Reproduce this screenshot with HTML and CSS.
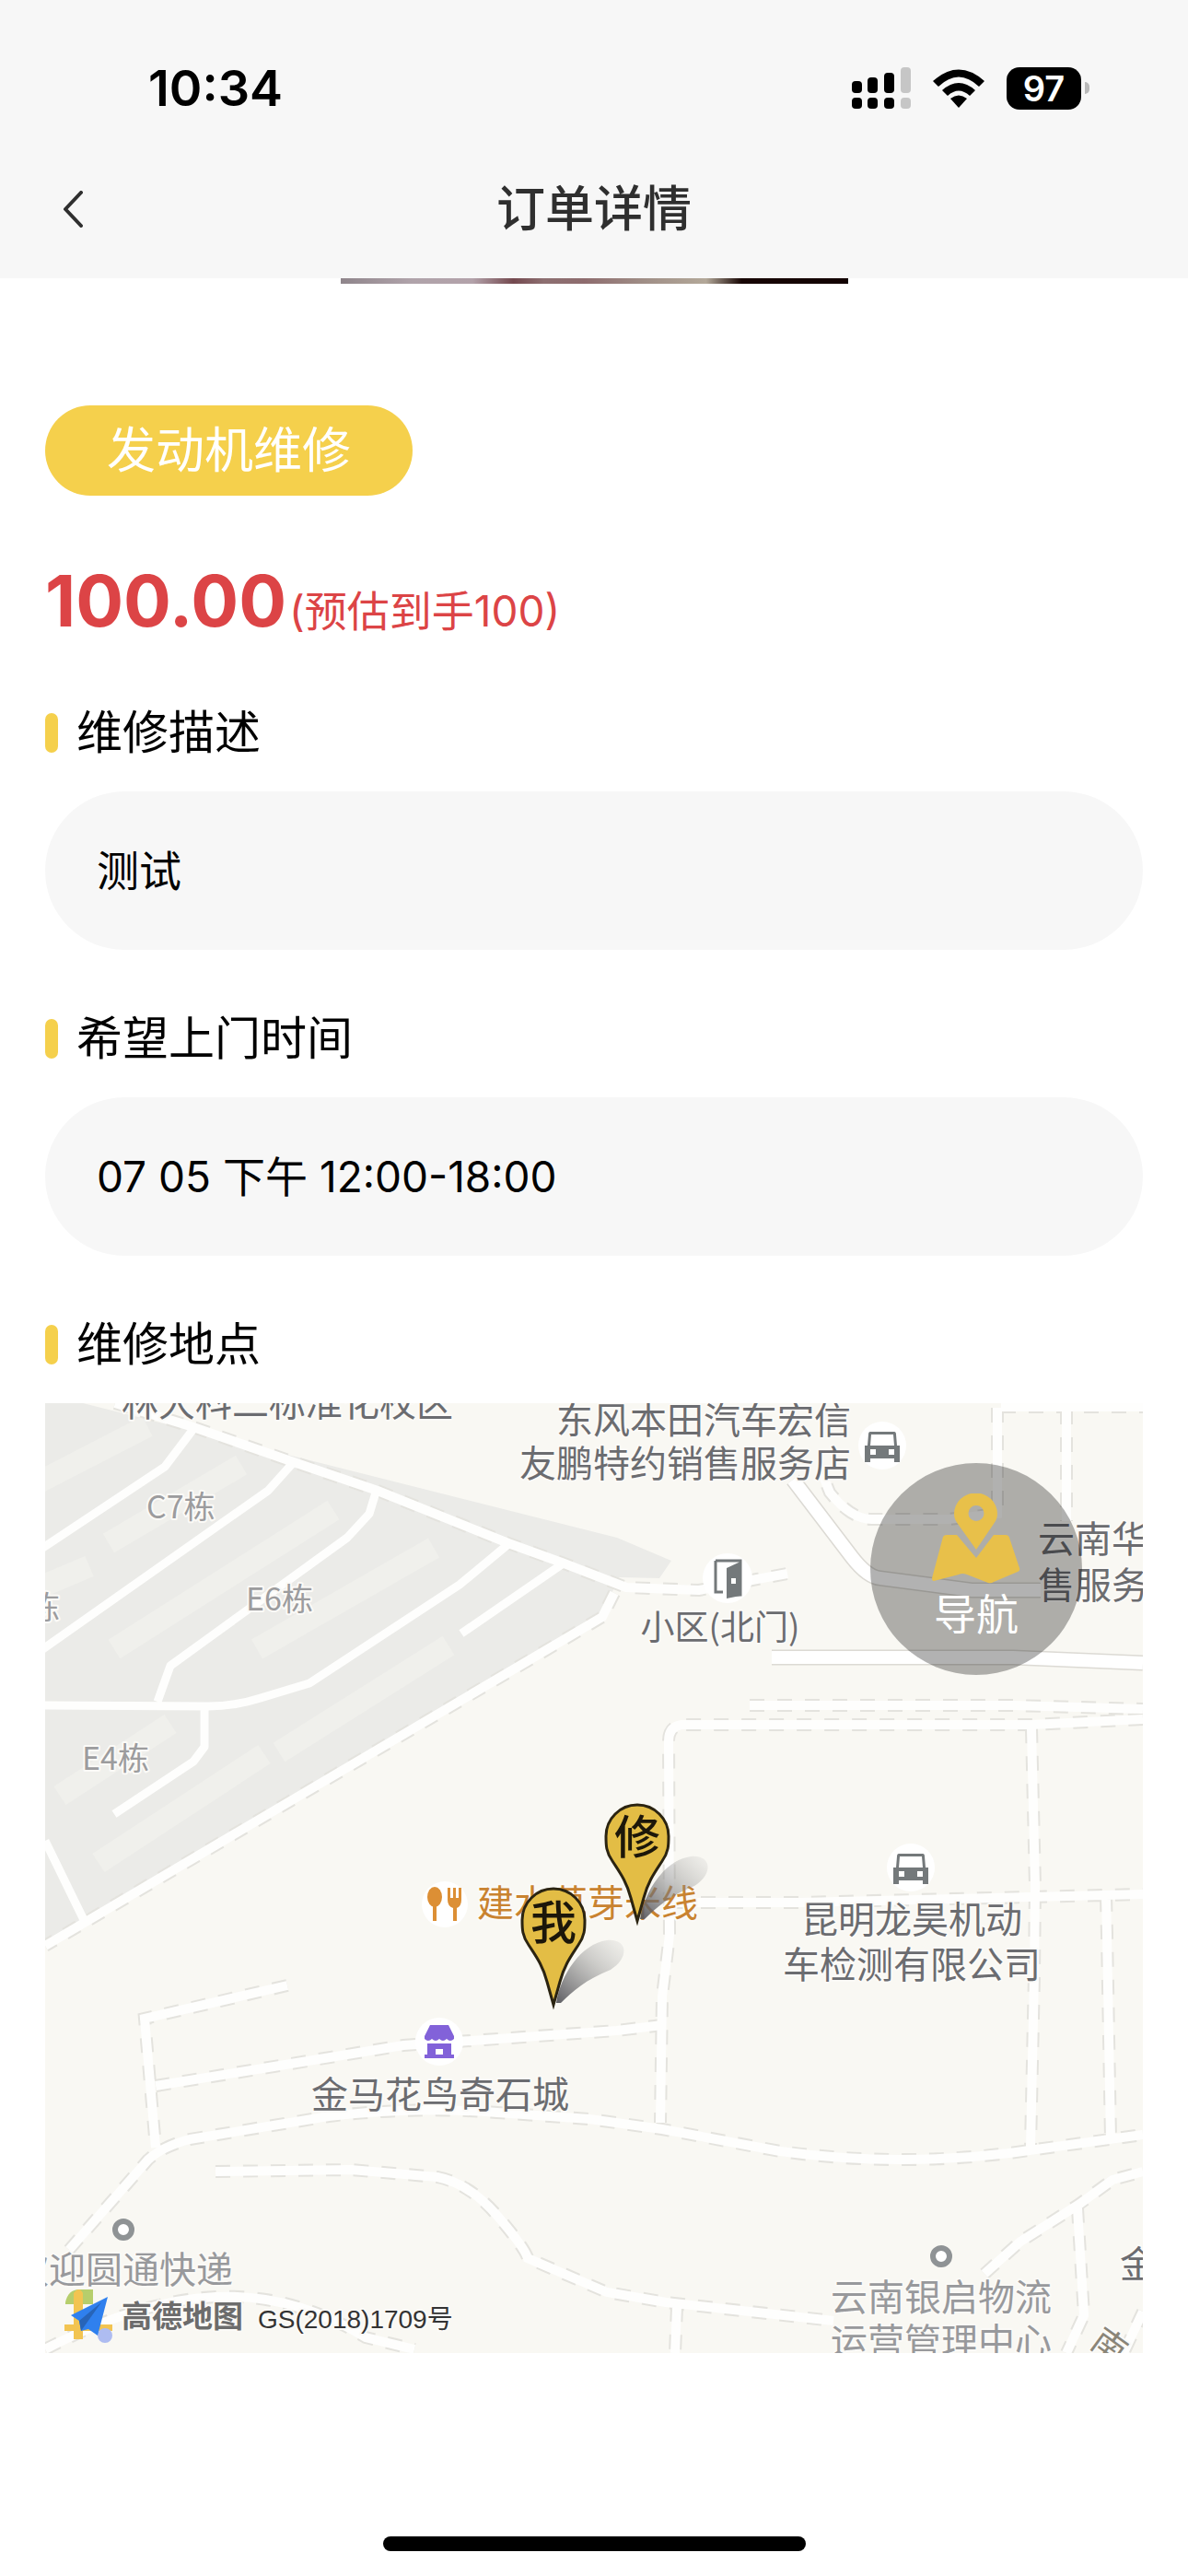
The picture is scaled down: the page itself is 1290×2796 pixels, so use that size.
FILE: index.html
```html
<!DOCTYPE html>
<html lang="zh-CN">
<head>
<meta charset="utf-8">
<meta name="viewport" content="width=device-width, initial-scale=1">
<title>订单详情</title>
<link rel="stylesheet" href="styles.css">
</head>
<body>
<header class="top">
  <div class="status">
    <time class="status-time">10:34</time>
    <div class="status-icons">
      <svg class="signal" viewBox="0 0 64 46" aria-label="信号">
        <g fill="#000">
          <rect x="0" y="15" width="11" height="13" rx="4"/><rect x="17" y="11" width="11" height="17" rx="4"/><rect x="35" y="6" width="11" height="22" rx="4"/>
          <rect x="0" y="33" width="11" height="12" rx="4"/><rect x="17" y="33" width="11" height="12" rx="4"/><rect x="35" y="33" width="11" height="12" rx="4"/>
        </g>
        <g fill="#c6c6c6"><rect x="53" y="0" width="11" height="28" rx="4"/><rect x="53" y="33" width="11" height="12" rx="4"/></g>
      </svg>
      <svg class="wifi" viewBox="0 0 56 42" aria-label="无线网络">
        <path d="M0 13Q28-12 56 13L50 19Q28-2 6 19Z"/>
        <path d="M10 23Q28 7 46 23L40 29Q28 18 16 29Z"/>
        <path d="M19 32Q28 25 37 32L28 42Z"/>
      </svg>
      <span class="battery">97</span>
    </div>
  </div>
  <nav class="bar">
    <button class="back" type="button" aria-label="返回">
      <svg viewBox="0 0 22 40"><path d="M20 2L3 20L20 38"/></svg>
    </button>
    <h1 class="title">订单详情</h1>
  </nav>
</header>

<main class="page">
  <div class="photo"></div>
  <span class="tag">发动机维修</span>
  <p class="price"><strong class="amount">100.00</strong><span class="estimate">(预估到手100)</span></p>

  <section class="block">
    <h2 class="heading">维修描述</h2>
    <p class="field">测试</p>
  </section>
  <section class="block">
    <h2 class="heading">希望上门时间</h2>
    <p class="field">07 05 下午 12:00-18:00</p>
  </section>
  <section class="block">
    <h2 class="heading">维修地点</h2>
    <div class="map">
      <svg class="map-canvas" viewBox="49 1523 1192 1031" preserveAspectRatio="xMidYMid slice">
        <defs>
          <linearGradient id="shade" x1="0" y1="1" x2="1" y2="0">
            <stop offset="0" stop-color="#55555a" stop-opacity=".95"/>
            <stop offset=".6" stop-color="#888" stop-opacity=".4"/>
            <stop offset="1" stop-color="#aaa" stop-opacity=".1"/>
          </linearGradient>
          <g id="pin">
            <path d="M3 -4C8 -35 30 -68 58 -72C82 -74 82 -52 62 -40C36 -30 20 -16 8 -4Z" fill="url(#shade)"/>
            <path d="M0 -2L-7 -27C-12 -46 -20 -56 -27 -67C-34 -77 -34 -84 -34 -94A34 34 0 0 1 34 -94C34 -84 34 -77 27 -67C20 -56 12 -46 7 -27Z" fill="#e3bd45" stroke="#2b2411" stroke-width="3"/>
          </g>
          <g id="car">
            <circle r="26" fill="#fff"/>
            <path d="M-13 -15H13Q15 -15 15 -12L16 0H19V18H13V14H-13V18H-19V0H-16L-15 -12Q-15 -15 -13 -15ZM-12 -12L-13 0H13L12 -12ZM-13 4V10H-7V4ZM7 4V10H13V4Z" fill="#74797b" fill-rule="evenodd"/>
          </g>
        </defs>

        <!-- residential area -->
        <path d="M90 1523L670 1669L729 1694L716 1713L672 1712L650 1761L49 2112V1523Z" fill="#ebebe8"/>
        <g class="buildings">
          <path d="M40 1610L160 1548M118 1675L262 1590M40 1724L97 1700M124 1790L362 1639M279 1790L471 1680M303 1902L487 1786M65 1949L185 1871M107 2022L287 1904"/>
        </g>

        <!-- footpaths: dashed kerb below, white surface above -->
        <g class="kerb">
          <path d="M125 1523L210 1549L316 1586L410 1618L552 1675L610 1696L680 1723L759 1726L822 1714L855 1708"/>
          <path d="M667 1729L654 1755L49 2112"/>
          <path d="M1083 1528V1643L1030 1649H948Q925 1650 901 1620L893 1600M1087 1527H1241M1158 1530V1651"/>
          <path d="M814 1851H1100L1241 1855M1241 1866L1120 1872H740Q726 1874 726 1890L727 2100L719 2167L717 2304"/>
          <path d="M1120 1876L1124 2047L1123 2144L1119 2331M731 2065H869L1241 2056M1201 2059L1202 2100L1206 2322"/>
          <path d="M75 2442L161 2344Q176 2330 206 2322L357 2297Q450 2286 540 2293L640 2300L719 2311L847 2335Q972 2352 1096 2337L1241 2317"/>
          <path d="M312 2155L157 2191L169 2331M169 2264L438 2220L670 2204L719 2198"/>
          <path d="M234 2357L381 2355L475 2363Q510 2370 540 2405T573 2451L659 2488L723 2499L905 2519M735 2504L733 2554"/>
          <path d="M49 2550Q150 2497 234 2493T397 2537L450 2550"/>
          <path d="M1069 2468L1108 2433L1171 2393L1208 2366L1241 2357M1170 2397L1177 2513L1158 2554M1241 2509L1220 2554"/>
        </g>
        <g class="path">
          <path d="M125 1523L210 1549L316 1586L410 1618L552 1675L610 1696L680 1723L759 1726L822 1714L855 1708"/>
          <path d="M667 1729L654 1755L49 2112"/>
          <path d="M1083 1528V1643L1030 1649H948Q925 1650 901 1620L893 1600M1087 1527H1241M1158 1530V1651"/>
          <path d="M814 1851H1100L1241 1855M1241 1866L1120 1872H740Q726 1874 726 1890L727 2100L719 2167L717 2304"/>
          <path d="M1120 1876L1124 2047L1123 2144L1119 2331M731 2065H869L1241 2056M1201 2059L1202 2100L1206 2322"/>
          <path d="M75 2442L161 2344Q176 2330 206 2322L357 2297Q450 2286 540 2293L640 2300L719 2311L847 2335Q972 2352 1096 2337L1241 2317"/>
          <path d="M312 2155L157 2191L169 2331M169 2264L438 2220L670 2204L719 2198"/>
          <path d="M234 2357L381 2355L475 2363Q510 2370 540 2405T573 2451L659 2488L723 2499L905 2519M735 2504L733 2554"/>
          <path d="M49 2550Q150 2497 234 2493T397 2537L450 2550"/>
          <path d="M1069 2468L1108 2433L1171 2393L1208 2366L1241 2357M1170 2397L1177 2513L1158 2554M1241 2509L1220 2554"/>
        </g>
        <g class="lane">
          <path d="M210 1551L179 1592L45 1681M318 1588L291 1618L45 1791M408 1620L401 1643L377 1669L185 1808L171 1847M552 1676L499 1720L336 1827L283 1843Q255 1852 226 1852L49 1851M610 1698L501 1773M222 1855V1896L210 1912L124 1969M49 1998L93 2088"/>
        </g>
        <g fill="none" stroke="#dcdad4" stroke-width="17"><path d="M861 1606L925 1690Q942 1712 956 1713L1055 1726H1130M838 1799H1100L1241 1805"/></g>
        <g fill="none" stroke="#fff" stroke-width="14"><path d="M861 1606L925 1690Q942 1712 956 1713L1055 1726H1130M838 1799H1100L1241 1805"/></g>

        <!-- building names -->
        <g class="label unit">
          <text x="159" y="1648">C7栋</text><text x="267" y="1748">E6栋</text><text x="89" y="1921">E4栋</text><text x="31" y="1757">栋</text>
        </g>

        <!-- places -->
        <g class="label place">
          <text x="132" y="1537">林大科二标准化校区</text>
          <text x="924" y="1556" text-anchor="end">东风本田汽车宏信</text>
          <text x="924" y="1603" text-anchor="end">友鹏特约销售服务店</text>
          <text x="1127" y="1685">云南华</text>
          <text x="1127" y="1735">售服务</text>
          <text class="gate" x="782" y="1780" text-anchor="middle">小区(北门)</text>
          <text x="990" y="2098" text-anchor="middle">昆明龙昊机动</text>
          <text x="990" y="2147" text-anchor="middle">车检测有限公司</text>
          <text x="478" y="2288" text-anchor="middle">金马花鸟奇石城</text>
          <text x="1216" y="2472">金</text>
        </g>
        <g class="label minor">
          <text x="253" y="2478" text-anchor="end">欢迎圆通快递</text>
          <text x="1022" y="2508" text-anchor="middle">云南银启物流</text>
          <text x="1022" y="2556" text-anchor="middle">运营管理中心</text>
        </g>
        <text class="label road" transform="translate(1182 2546) rotate(36)">南</text>
        <text class="label food" x="518" y="2080">建水草芽米线</text>

        <!-- place icons -->
        <use href="#car" x="958" y="1569"/>
        <use href="#car" x="989" y="2027"/>
        <g transform="translate(790 1713)">
          <circle r="27" fill="#fff"/>
          <path d="M-13 -19H14V18H8M-13 -19V15H-5" fill="none" stroke="#74797b" stroke-width="3"/>
          <path d="M-1 -11L14 -18V19L-1 22Z" fill="#74797b"/><rect x="4" y="0" width="5" height="6" fill="#fff"/>
        </g>
        <g transform="translate(483 2067)">
          <circle r="25" fill="#fff"/>
          <g fill="#dc8f35"><ellipse cx="-11" cy="-8" rx="8" ry="11"/><path d="M-13 0H-9V18H-13ZM3 -18H6V-7H9V-18H12V-7H15V-18H18V-5Q18 2 13 4V18H9V4Q3 2 3 -5Z"/></g>
        </g>
        <g transform="translate(477 2216)">
          <circle r="26" fill="#fff"/>
          <path d="M-10 -18H10L16 -6V-3Q12 1 8 -3Q4 1 0 -3Q-4 1 -8 -3Q-12 1 -16 -3V-6ZM-13 2H13V14H16V18H-16V14H-13ZM-4 8V14H4V8Z" fill="#8262d9" fill-rule="evenodd"/>
        </g>
        <g fill="#fff" stroke="#8f9395" stroke-width="6"><circle cx="134" cy="2420" r="9"/><circle cx="1022" cy="2449" r="9"/></g>

        <!-- pins -->
        <use href="#pin" x="692" y="2087"/><text class="pin-text" x="692" y="2012">修</text>
        <use href="#pin" x="601" y="2178"/><text class="pin-text" x="601" y="2105">我</text>

        <!-- map supplier -->
        <g transform="translate(70 2485)">
          <path d="M1 14Q4 0 16 0H31V16H1Z" fill="#b6ce6c"/>
          <path d="M10 4Q16 -4 20 4V54H10ZM0 38H52V45H0Z" fill="#f2c451"/>
          <circle cx="44" cy="50" r="8" fill="#aebcf1"/>
          <path d="M7 28L47 8L36 50L26 43L18 45L16 34Z" fill="#2f80ee"/>
          <path d="M16 34L40 14L18 45Z" fill="#2764b8"/>
        </g>
        <text class="label brand" x="132" y="2526">高德地图</text>
        <text class="label licence" x="280" y="2527">GS(2018)1709号</text>
      </svg>
      <button class="navigate" type="button">
        <svg class="navigate-icon" viewBox="0 0 96 99">
          <path d="M12 47Q13 45 16 45H27L48 70L67 45H80Q83 45 84 48L95 81Q96 84 93 85L67 96Q64 98 61 97L38 88Q33 86 29 88L2 95Q0 95 0 92Z"/>
          <path fill-rule="evenodd" d="M48 61L28 33Q24 28 24 22A23 22 0 0 1 71 22Q71 28 67 33ZM48 13A8 8 0 1 0 48 30A8 8 0 1 0 48 13Z"/>
        </svg>
        <span>导航</span>
      </button>
    </div>
  </section>
</main>
<div class="home-indicator"></div>
</body>
</html>
```
FILE: styles.css
```css
* {
  box-sizing: border-box;
}

body {
  margin: 0;
  min-height: 100vh;
  display: flex;
  flex-direction: column;
  background: #fff;
  color: #000;
  font-family: Inter, "Noto Sans CJK SC", sans-serif;
}

h1, h2, p {
  margin: 0;
  font-weight: 400;
}

button {
  border: 0;
  padding: 0;
  background: none;
  font: inherit;
  cursor: pointer;
}

/* header */
.top {
  background: #f7f7f7;
}

.status {
  display: flex;
  align-items: flex-end;
  justify-content: space-between;
  height: 128px;
  padding: 0 107px 0 161px;
}

.status-time {
  font-size: 54px;
  font-weight: 600;
  line-height: 64px;
}

.status-icons {
  display: flex;
  align-items: center;
  gap: 24px;
  height: 64px;
}

.signal {
  width: 64px;
  height: 46px;
}

.wifi {
  width: 56px;
  height: 42px;
}

.battery {
  position: relative;
  width: 81px;
  margin-right: 9px;
  border-radius: 14px;
  background: #000;
  color: #fff;
  font-size: 38px;
  font-weight: 600;
  line-height: 46px;
  text-align: center;
}

.battery::after {
  content: "";
  position: absolute;
  top: 16px;
  right: -9px;
  width: 5px;
  height: 13px;
  border-radius: 0 6px 6px 0;
  background: #b9b9b9;
}

.bar {
  display: grid;
  grid-template-columns: 88px 1fr 88px;
  align-items: center;
  height: 174px;
  padding: 24px 35px 0;
}

.back {
  display: grid;
  place-items: center;
  height: 88px;
}

.back svg {
  width: 22px;
  height: 40px;
  fill: none;
  stroke: #2f2f2f;
  stroke-width: 4;
  stroke-linecap: round;
  stroke-linejoin: round;
}

.title {
  color: #2f2f2f;
  font-size: 53px;
  font-weight: 500;
  line-height: 64px;
  text-align: center;
}

/* order */
.page {
  padding: 0 49px;
}

.photo {
  width: 551px;
  height: 6px;
  margin: 0 auto 132px;
  background: linear-gradient(90deg, #8f858b 0, #b0a3aa 14%, #b3a2aa 26%, #74494f 34%, #8d6f71 40%, #8e6c6e 48%, #a08f87 60%, #b3a899 72%, #170503 79%, #120202 100%);
}

.tag {
  display: table;
  padding: 0 67px;
  border-radius: 49px;
  background: #f5d04c;
  color: #fff;
  font-size: 53px;
  line-height: 98px;
}

.price {
  display: flex;
  align-items: baseline;
  gap: 3px;
  margin: 66px 0 52px;
  color: #dc4446;
  line-height: 96px;
}

.amount {
  font-size: 77px;
  font-weight: 700;
}

.estimate {
  font-size: 46px;
}

.block + .block {
  margin-top: 64px;
}

.heading {
  display: flex;
  align-items: center;
  gap: 20px;
  margin-bottom: 32px;
  font-size: 50px;
  line-height: 64px;
}

.heading::before {
  content: "";
  width: 14px;
  height: 43px;
  border-radius: 7px;
  background: #f5d04c;
}

.field {
  padding: 54px 56px;
  border-radius: 86px;
  background: #f7f7f7;
  font-size: 46px;
  line-height: 64px;
}

/* map */
.map {
  position: relative;
  background: #f9f8f3;
}

.map-canvas {
  display: block;
  width: 100%;
  height: auto;
  background: #f9f8f3;
}

.buildings {
  fill: none;
  stroke: #f0f0ec;
  stroke-width: 24;
}

.kerb {
  fill: none;
  stroke: #e4e3de;
  stroke-width: 14;
  stroke-dasharray: 16 14;
}

.path {
  fill: none;
  stroke: #fefefd;
  stroke-width: 10;
}

.lane {
  fill: none;
  stroke: #fefefd;
  stroke-width: 9;
  stroke-linejoin: round;
}

.label {
  font-family: "Noto Sans CJK SC", sans-serif;
  font-size: 40px;
  paint-order: stroke;
  stroke: #fbfaf7;
  stroke-width: 4px;
  stroke-linejoin: round;
}

.unit {
  font-size: 34px;
  fill: #9c9c9e;
}

.place {
  fill: #6b6c70;
}

.gate {
  font-size: 37px;
}

.minor {
  fill: #98999c;
}

.food {
  fill: #c98330;
}

.road {
  font-size: 37px;
  fill: #8a8578;
}

.brand {
  font-size: 33px;
  font-weight: 700;
  fill: #6c6c6c;
}

.licence {
  font-family: "Liberation Sans", "Noto Sans CJK SC", sans-serif;
  font-size: 28px;
  fill: #333;
}

.pin-text {
  font-size: 50px;
  font-weight: 500;
  text-anchor: middle;
  fill: #1c170a;
}

.navigate {
  position: absolute;
  top: 65px;
  right: 66px;
  display: flex;
  flex-direction: column;
  align-items: center;
  width: 230px;
  height: 230px;
  padding-top: 33px;
  border-radius: 50%;
  background: rgba(0, 0, 0, 0.3);
  color: #fff;
  font-size: 46px;
  line-height: 64px;
}

.navigate-icon {
  width: 96px;
  height: 99px;
  fill: #e8c04a;
}

.home-indicator {
  width: 459px;
  height: 16px;
  margin: auto auto 27px;
  border-radius: 8px;
  background: #000;
}
```
